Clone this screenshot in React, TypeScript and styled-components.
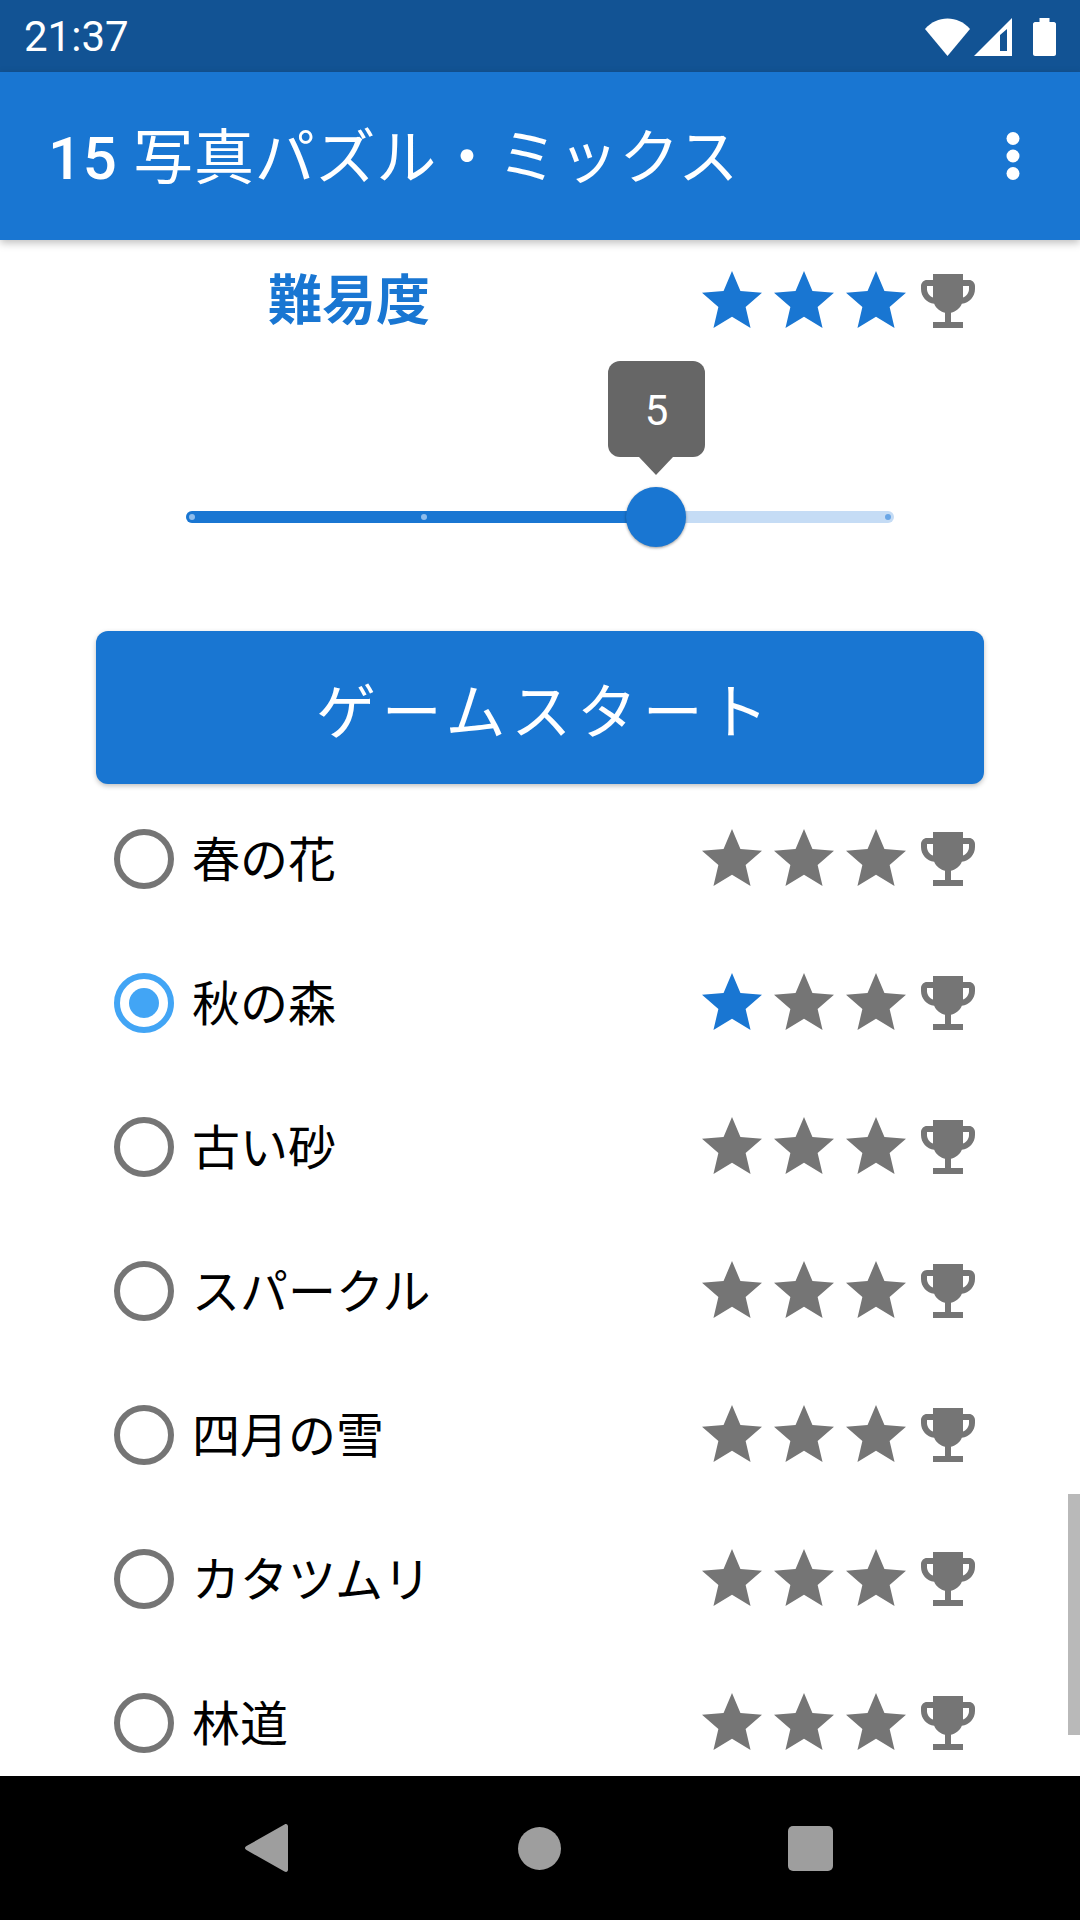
import React from "react";
import styled, { createGlobalStyle } from "styled-components";

const Global = createGlobalStyle`
  html, body { margin: 0; padding: 0; background: #fff; }
  * { box-sizing: border-box; }
`;

const FONT = `Roboto, "Noto Sans CJK JP", sans-serif`;
const BLUE = "#1976d2";
const GREY = "#757575";

const Screen = styled.div`
  width: 1080px;
  height: 1920px;
  display: flex;
  flex-direction: column;
  overflow: hidden;
  background: #fff;
  font-family: ${FONT};
`;
const StatusBar = styled.div`
  height: 72px;
  flex: none;
  display: flex;
  align-items: center;
  justify-content: space-between;
  padding: 0 24px;
  background: #125394;
  color: #fff;
`;
const Clock = styled.span`
  font-size: 42px;
  line-height: 1;
  padding-top: 2px;
`;
const StatusIcons = styled.div`
  display: flex;
  align-items: center;
  padding-top: 1px;
`;
const SignalGap = styled.span`
  width: 4px;
`;
const BatteryGap = styled.span`
  width: 21px;
`;
const AppBar = styled.header`
  height: 168px;
  flex: none;
  display: flex;
  align-items: center;
  justify-content: space-between;
  padding: 0 60px 0 48px;
  background: ${BLUE};
  color: #fff;
  box-shadow: 0 3px 8px rgba(0, 0, 0, 0.25);
  position: relative;
  z-index: 1;
`;
const Title = styled.h1`
  margin: 0;
  padding-top: 5px;
  font-size: 60px;
  font-weight: 400;
  line-height: 1;
  letter-spacing: 0.75px;
  white-space: nowrap;
`;
const TitleNumber = styled.span`
  font-weight: 500;
`;
const Content = styled.main`
  flex: 1;
  min-height: 0;
  position: relative;
  overflow: hidden;
`;
const HeaderRow = styled.div`
  height: 122px;
  display: flex;
  align-items: center;
  padding: 0 96px 0 268px;
`;
const Heading = styled.h2`
  flex: 1;
  margin: 0;
  padding-top: 2px;
  font-size: 54px;
  font-weight: 700;
  line-height: 1;
  color: ${BLUE};
`;
const Rating = styled.div`
  display: flex;
`;
const SliderArea = styled.div`
  height: 269px;
  padding-top: 149px;
  padding-left: 186px;
`;
const Track = styled.div`
  position: relative;
  width: 708px;
  height: 12px;
  border-radius: 6px;
  background: #c5dcf5;
`;
const TrackFill = styled.div`
  height: 100%;
  border-radius: 6px 0 0 6px;
  background: ${BLUE};
`;
const Tick = styled.span<{ $on: boolean }>`
  position: absolute;
  top: 3px;
  width: 6px;
  height: 6px;
  border-radius: 50%;
  background: ${(p) => (p.$on ? "#8dbcec" : "#6aa6e6")};
`;
const Thumb = styled.div`
  position: absolute;
  left: 440px;
  top: -24px;
  width: 60px;
  height: 60px;
  border-radius: 50%;
  background: ${BLUE};
  box-shadow: 0 1px 3px rgba(0, 0, 0, 0.4);
`;
const Bubble = styled.div`
  position: absolute;
  left: 422px;
  top: -150px;
  width: 97px;
  height: 96px;
  padding-top: 2px;
  border-radius: 12px;
  background: #666;
  color: #fff;
  font-size: 42px;
  display: flex;
  align-items: center;
  justify-content: center;
  &::after {
    content: "";
    position: absolute;
    left: 31px;
    top: 96px;
    border-left: 17px solid transparent;
    border-right: 17px solid transparent;
    border-top: 18px solid #666;
  }
`;
const StartButton = styled.button`
  display: block;
  width: 888px;
  height: 153px;
  margin: 0 96px;
  padding: 0 0 0 10px;
  border: 0;
  border-radius: 12px;
  background: ${BLUE};
  color: #fff;
  font-family: ${FONT};
  font-size: 60px;
  letter-spacing: 5.7px;
  box-shadow: 0 2px 5px rgba(0, 0, 0, 0.25);
`;
const Rows = styled.div`
  padding-top: 3px;
`;
const Row = styled.div`
  height: 144px;
  display: flex;
  align-items: center;
  padding: 0 96px 0 114px;
`;
const Radio = styled.span<{ $on: boolean }>`
  width: 60px;
  height: 60px;
  flex: none;
  display: flex;
  align-items: center;
  justify-content: center;
  border-radius: 50%;
  border: 6px solid ${(p) => (p.$on ? "#42a5f5" : GREY)};
  &::after {
    content: "";
    display: ${(p) => (p.$on ? "block" : "none")};
    width: 30px;
    height: 30px;
    border-radius: 50%;
    background: #42a5f5;
  }
`;
const Label = styled.span`
  flex: 1;
  margin-left: 18px;
  padding-top: 4px;
  font-size: 48px;
  line-height: 1;
  color: #000;
`;
const ScrollThumb = styled.div`
  position: absolute;
  right: 0;
  top: 1254px;
  width: 12px;
  height: 241px;
  background: #b9b9b9;
`;
const NavBar = styled.nav`
  height: 144px;
  flex: none;
  display: flex;
  align-items: center;
  padding-left: 245px;
  gap: 228px;
  background: #000;
`;
const IconSvg = styled.svg`
  display: block;
  flex: none;
`;
const HomeIcon = styled(IconSvg)`
  margin: 0 -1px 0 2px;
`;

const Star = ({ color }: { color: string }) => (
  <IconSvg width="72" height="72" viewBox="0 0 24 24" fill={color}>
    <path d="M12 17.27L18.18 21l-1.64-7.03L22 9.24l-7.19-.61L12 2 9.19 8.63 2 9.24l5.46 4.73L5.82 21z" />
  </IconSvg>
);
const Trophy = () => (
  <IconSvg width="72" height="72" viewBox="0 0 24 24" fill={GREY}>
    <path d="M19 5h-2V3H7v2H5c-1.1 0-2 .9-2 2v1c0 2.55 1.92 4.63 4.39 4.94.63 1.5 1.98 2.63 3.61 2.96V19H7v2h10v-2h-4v-3.1c1.63-.33 2.98-1.46 3.61-2.96C19.08 12.63 21 10.55 21 8V7c0-1.1-.9-2-2-2zM5 8V7h2v3.82C5.84 10.4 5 9.3 5 8zm14 0c0 1.3-.84 2.4-2 2.82V7h2v1z" />
  </IconSvg>
);
const StarRating = ({ filled }: { filled: number }) => (
  <Rating>
    {[0, 1, 2].map((i) => (
      <Star key={i} color={i < filled ? BLUE : GREY} />
    ))}
    <Trophy />
  </Rating>
);

const puzzles = [
  { name: "春の花", stars: 0, on: false },
  { name: "秋の森", stars: 1, on: true },
  { name: "古い砂", stars: 0, on: false },
  { name: "スパークル", stars: 0, on: false },
  { name: "四月の雪", stars: 0, on: false },
  { name: "カタツムリ", stars: 0, on: false },
  { name: "林道", stars: 0, on: false },
];

export default function App() {
  return (
    <Screen>
      <Global />
      <StatusBar>
        <Clock>21:37</Clock>
        <StatusIcons>
          <IconSvg width="45" height="38" viewBox="0 0 45 38" fill="#fff">
            <path d="M0 11C6 4 14 0.500 22.500 0.500S39 4 45 11L22.500 38z" />
          </IconSvg>
          <SignalGap />
          <IconSvg width="38" height="38" viewBox="0 0 38 38" fill="#fff">
            <path fillRule="evenodd" d="M38 0V38H0zM33 11L26 17V33H33z" />
          </IconSvg>
          <BatteryGap />
          <IconSvg width="23" height="38" viewBox="0 0 23 38" fill="#fff">
            <path d="M6.500 0H16.500V4H21C22 4 23 5 23 6V36C23 37 22 38 21 38H2C1 38 0 37 0 36V6C0 5 1 4 2 4H6.500z" />
          </IconSvg>
        </StatusIcons>
      </StatusBar>
      <AppBar>
        <Title>
          <TitleNumber>15</TitleNumber> 写真パズル・ミックス
        </Title>
        <IconSvg width="14" height="48" viewBox="0 0 14 48" fill="#fff">
          <circle cx="7" cy="6.500" r="6.500" />
          <circle cx="7" cy="24" r="6.500" />
          <circle cx="7" cy="41.500" r="6.500" />
        </IconSvg>
      </AppBar>
      <Content>
        <HeaderRow>
          <Heading>難易度</Heading>
          <StarRating filled={3} />
        </HeaderRow>
        <SliderArea>
          <Track>
            <TrackFill style={{ width: 470 }} />
            <Tick $on style={{ left: 3 }} />
            <Tick $on style={{ left: 235 }} />
            <Tick $on={false} style={{ left: 699 }} />
            <Bubble>5</Bubble>
            <Thumb />
          </Track>
        </SliderArea>
        <StartButton>ゲームスタート</StartButton>
        <Rows>
          {puzzles.map((p) => (
            <Row key={p.name}>
              <Radio $on={p.on} />
              <Label>{p.name}</Label>
              <StarRating filled={p.stars} />
            </Row>
          ))}
        </Rows>
        <ScrollThumb />
      </Content>
      <NavBar>
        <IconSvg width="43" height="48" viewBox="0 0 43 48" fill="#9e9e9e">
          <path d="M39.500 0.500C41.500 -0.500 43 0.500 43 2.500V45.500C43 47.500 41.500 48.500 39.500 47.500L1.500 26C-0.500 25 -0.500 23 1.500 22z" />
        </IconSvg>
        <HomeIcon width="43" height="43" viewBox="0 0 43 43" fill="#9e9e9e">
          <circle cx="21.500" cy="21.500" r="21.500" />
        </HomeIcon>
        <IconSvg width="45" height="45" viewBox="0 0 45 45" fill="#9e9e9e">
          <rect width="45" height="45" rx="5" />
        </IconSvg>
      </NavBar>
    </Screen>
  );
}
